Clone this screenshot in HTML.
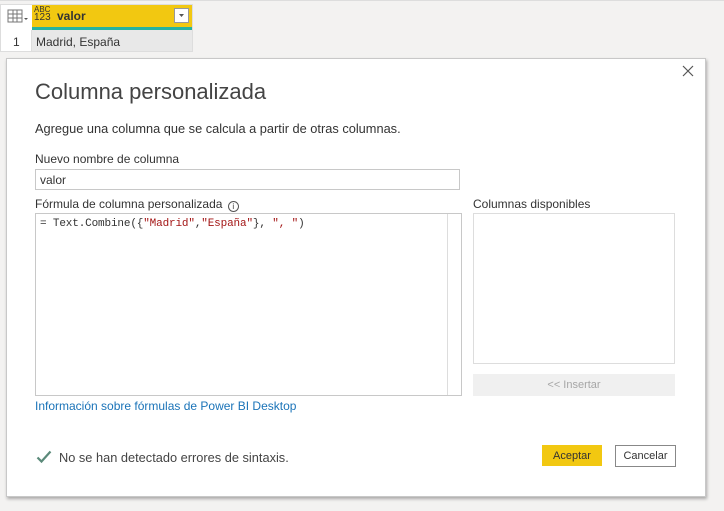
<!DOCTYPE html>
<html><head><meta charset="utf-8"><style>
*{box-sizing:border-box;margin:0;padding:0}
body{width:724px;height:511px;background:#f3f2f1;font-family:"Liberation Sans",sans-serif;color:#333;position:relative;overflow:hidden}
.a{position:absolute}
.t{font-size:12px;color:#333;white-space:nowrap}
</style></head><body>
<div class="a" style="left:0;top:0;width:724px;height:1px;background:#ddd"></div>
<div class="a" style="left:0;top:4px;width:193px;height:48px;background:#fff;border:1px solid #ddd"></div>
<div class="a" style="left:4px;top:7px;width:26px;height:20px">
<svg width="26" height="20"><rect x="4" y="3" width="14" height="12" fill="none" stroke="#777"/><line x1="4" y1="7" x2="18" y2="7" stroke="#777"/><line x1="4" y1="11" x2="18" y2="11" stroke="#777"/><line x1="9" y1="3" x2="9" y2="15" stroke="#777"/><line x1="13" y1="3" x2="13" y2="15" stroke="#777"/><path d="M20 11l2 2 2-2" fill="#555"/></svg></div>
<div class="a" style="left:32px;top:5px;width:160px;height:22px;background:#f2c811"></div>
<div class="a" style="left:32px;top:27px;width:160px;height:3px;background:#26b3a0"></div>
<div class="a" style="left:34px;top:6px;font-size:8px;line-height:8px;color:#333">ABC<br><span style="font-size:10px">123</span></div>
<div class="a" style="left:57px;top:9px;font-size:12px;font-weight:bold;color:#333">valor</div>
<div class="a" style="left:174px;top:8px;width:15px;height:15px;background:#fff;border:1px solid #999"><svg width="13" height="13"><path d="M4 5l2.5 3 2.5-3z" fill="#555"/></svg></div>
<div class="a" style="left:32px;top:30px;width:160px;height:21px;background:#e8e8e8"></div>
<div class="a" style="left:0;top:30px;width:32px;height:21px;border-right:1px solid #ddd"></div>
<div class="a t" style="left:13px;top:35px">1</div>
<div class="a t" style="left:36px;top:35px">Madrid, España</div>
<div class="a" style="left:6px;top:58px;width:700px;height:439px;background:#fff;border:1px solid #c8c8c8;box-shadow:1px 2px 3px rgba(0,0,0,.3)"></div>
<svg class="a" style="left:682px;top:65px" width="12" height="12"><path d="M1 1L11 11M11 1L1 11" stroke="#555" stroke-width="1.2"/></svg>
<div class="a" style="left:35px;top:79px;font-size:22px;color:#444">Columna personalizada</div>
<div class="a" style="left:35px;top:121px;font-size:12.8px;color:#333">Agregue una columna que se calcula a partir de otras columnas.</div>
<div class="a t" style="left:35px;top:152px">Nuevo nombre de columna</div>
<div class="a" style="left:35px;top:169px;width:425px;height:21px;border:1px solid #c8c8c8"></div>
<div class="a t" style="left:40px;top:173px">valor</div>
<div class="a t" style="left:35px;top:197px">Fórmula de columna personalizada <span style="display:inline-block;margin-left:2px;width:11px;height:11px;border:1px solid #555;border-radius:50%;font-size:8px;text-align:center;line-height:9px;vertical-align:-1px">i</span></div>
<div class="a" style="left:35px;top:213px;width:427px;height:183px;border:1px solid #c8c8c8"></div>
<div class="a" style="left:447px;top:214px;width:1px;height:181px;background:#ddd"></div>
<div class="a" style="left:40px;top:218px;font-family:'Liberation Mono',monospace;font-size:11px;color:#333;white-space:pre;letter-spacing:-0.15px">= Text.Combine({<span style="color:#a31515">"Madrid"</span>,<span style="color:#a31515">"España"</span>}, <span style="color:#a31515">", "</span>)</div>
<div class="a t" style="left:473px;top:197px">Columnas disponibles</div>
<div class="a" style="left:473px;top:213px;width:202px;height:151px;border:1px solid #ddd"></div>
<div class="a" style="left:473px;top:374px;width:202px;height:22px;background:#f0f0f0;color:#a6a6a6;font-size:11px;text-align:center;line-height:22px">&lt;&lt; Insertar</div>
<div class="a" style="left:35px;top:399px;font-size:12px;color:#1a73b8">Información sobre fórmulas de Power BI Desktop</div>
<svg class="a" style="left:36px;top:450px" width="16" height="14"><path d="M1.5 7.5l4 4 9-10" fill="none" stroke="#5b8a7a" stroke-width="2.2"/></svg>
<div class="a" style="left:59px;top:450px;font-size:12.8px;color:#444">No se han detectado errores de sintaxis.</div>
<div class="a" style="left:542px;top:445px;width:60px;height:21px;background:#f2c811;font-size:11px;text-align:center;line-height:22px;color:#333">Aceptar</div>
<div class="a" style="left:615px;top:445px;width:61px;height:22px;border:1px solid #888;font-size:11px;text-align:center;line-height:21px;color:#333">Cancelar</div>
</body></html>
